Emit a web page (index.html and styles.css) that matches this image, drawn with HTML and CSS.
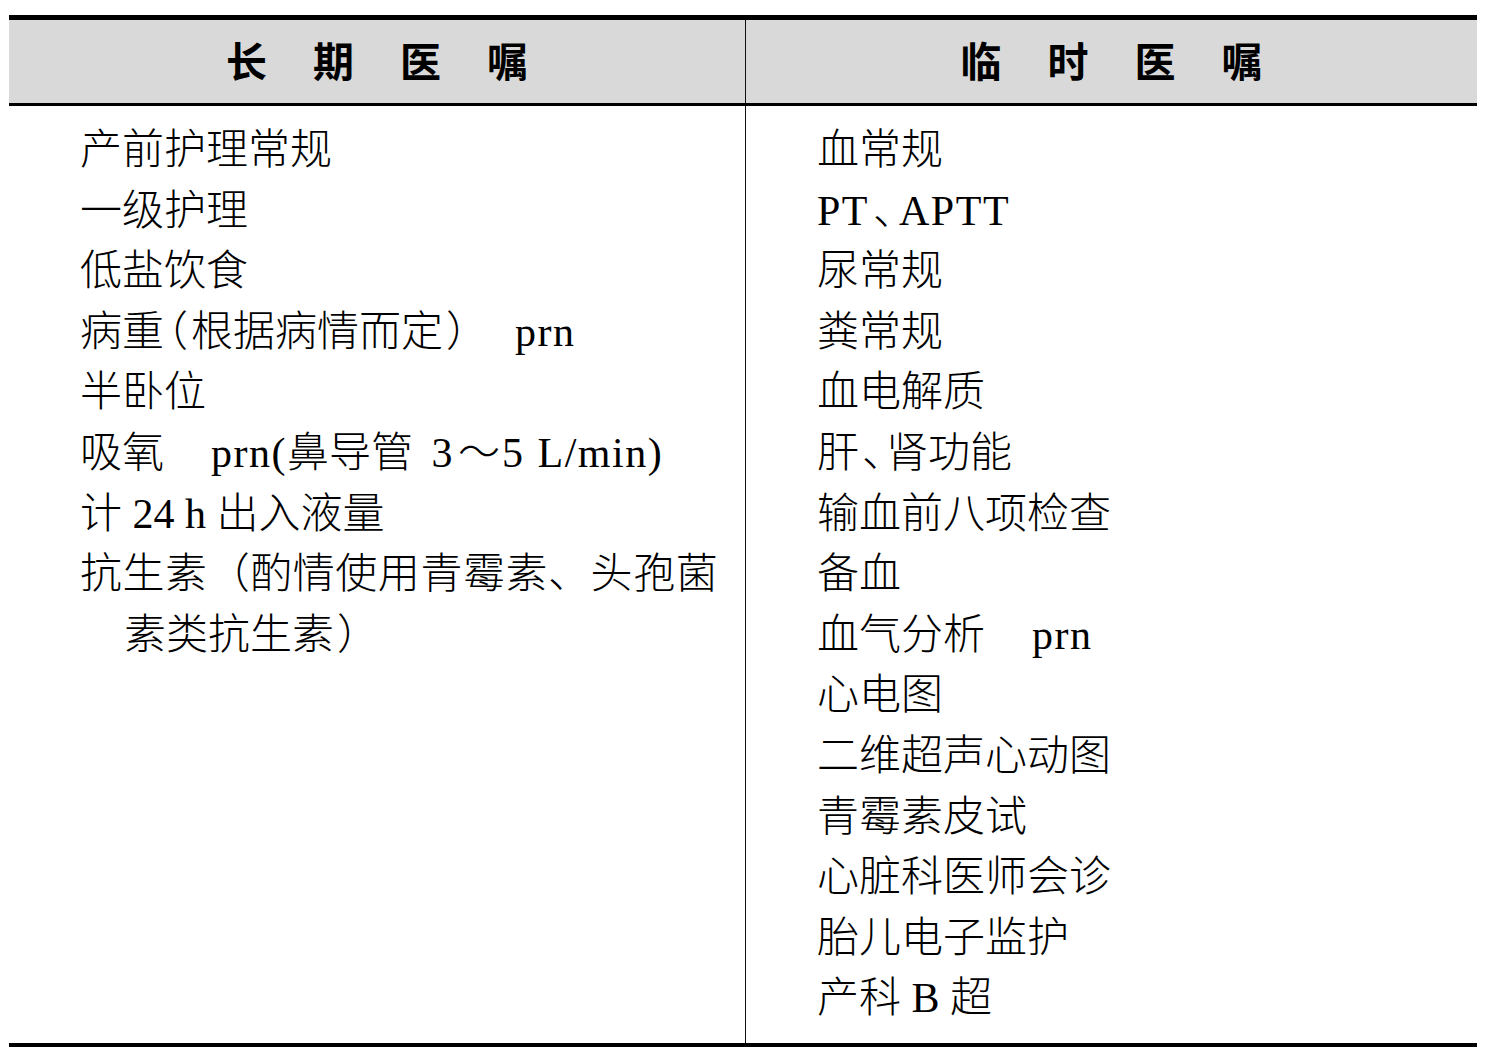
FILE: index.html
```html
<!DOCTYPE html>
<html lang="zh-CN">
<head>
<meta charset="utf-8">
<title>医嘱</title>
<link rel="stylesheet" href="styles.css">
</head>
<body>
<div class="orders">
  <div class="row head">
    <div class="cell hcell left">长期医嘱</div>
    <div class="cell hcell">临时医嘱</div>
  </div>
  <div class="row body">
    <div class="cell col left">
      <div class="line">产前护理常规</div>
      <div class="line">一级护理</div>
      <div class="line">低盐饮食</div>
      <div class="line">病重<span class="hw">（</span>根据病情而定<span class="hw">）</span><span class="gap1"></span><span class="lat">prn</span></div>
      <div class="line">半卧位</div>
      <div class="line">吸氧<span class="gap2"></span><span class="lat">prn(</span>鼻导管 <span class="lat num">3</span><span class="tilde">～</span><span class="lat tight">5 L/min)</span></div>
      <div class="line">计 24 h 出入液量</div>
      <div class="line spread">抗生素（酌情使用青霉素、头孢菌</div>
      <div class="line cont">素类抗生素<span class="hw">）</span></div>
    </div>
    <div class="cell col">
      <div class="line">血常规</div>
      <div class="line"><span class="lat">PT</span><span class="hw wide">、</span><span class="lat">APTT</span></div>
      <div class="line">尿常规</div>
      <div class="line">粪常规</div>
      <div class="line">血电解质</div>
      <div class="line">肝<span class="hw">、</span>肾功能</div>
      <div class="line">输血前八项检查</div>
      <div class="line">备血</div>
      <div class="line">血气分析<span class="gap2"></span><span class="lat">prn</span></div>
      <div class="line">心电图</div>
      <div class="line">二维超声心动图</div>
      <div class="line">青霉素皮试</div>
      <div class="line">心脏科医师会诊</div>
      <div class="line">胎儿电子监护</div>
      <div class="line">产科 B 超</div>
    </div>
  </div>
</div>
</body>
</html>
```

FILE: styles.css
```css
html, body {
  margin: 0;
  padding: 0;
  background: #ffffff;
}

body {
  font-family: "Liberation Serif", "Noto Sans CJK SC", serif;
  color: #000000;
}

.orders {
  margin: 15px 0 0 9px;
  width: 1468px;
  border-top: 5px solid #000000;
  border-bottom: 4px solid #000000;
}

.row {
  display: grid;
  grid-template-columns: 737px 1fr;
}

.head {
  background: #d9d9d9;
  border-bottom: 3px solid #000000;
  height: 83px;
  box-sizing: content-box;
}

.cell {
  box-sizing: border-box;
}

.cell.left {
  border-right: 1px solid #111111;
}

.hcell {
  display: flex;
  align-items: center;
  justify-content: center;
  font-family: "Noto Sans CJK SC", sans-serif;
  font-weight: 700;
  font-size: 41px;
  letter-spacing: 46px;
  padding-left: 46px;
  padding-bottom: 5px;
}

.body {
  height: 937px;
}

.col {
  padding: 14px 0 0 71px;
  font-size: 42px;
}

.line {
  height: 60.6px;
  line-height: 60.6px;
  white-space: nowrap;
  font-weight: 300;
}

.line.cont {
  padding-left: 44px;
}

.line.spread {
  letter-spacing: 0.55px;
}

.hw {
  font-feature-settings: "halt" 1;
  padding: 0 3px;
}

.hw.wide {
  padding: 0 5px 0 4px;
}

.lat {
  letter-spacing: 1.5px;
  word-spacing: 6px;
}

.lat.num {
  margin-left: 8px;
}

.lat.tight {
  word-spacing: 1px;
}

.tilde {
  margin: 0 2px 0 4px;
}

.gap1 {
  display: inline-block;
  width: 45px;
}

.gap2 {
  display: inline-block;
  width: 47px;
}
```
